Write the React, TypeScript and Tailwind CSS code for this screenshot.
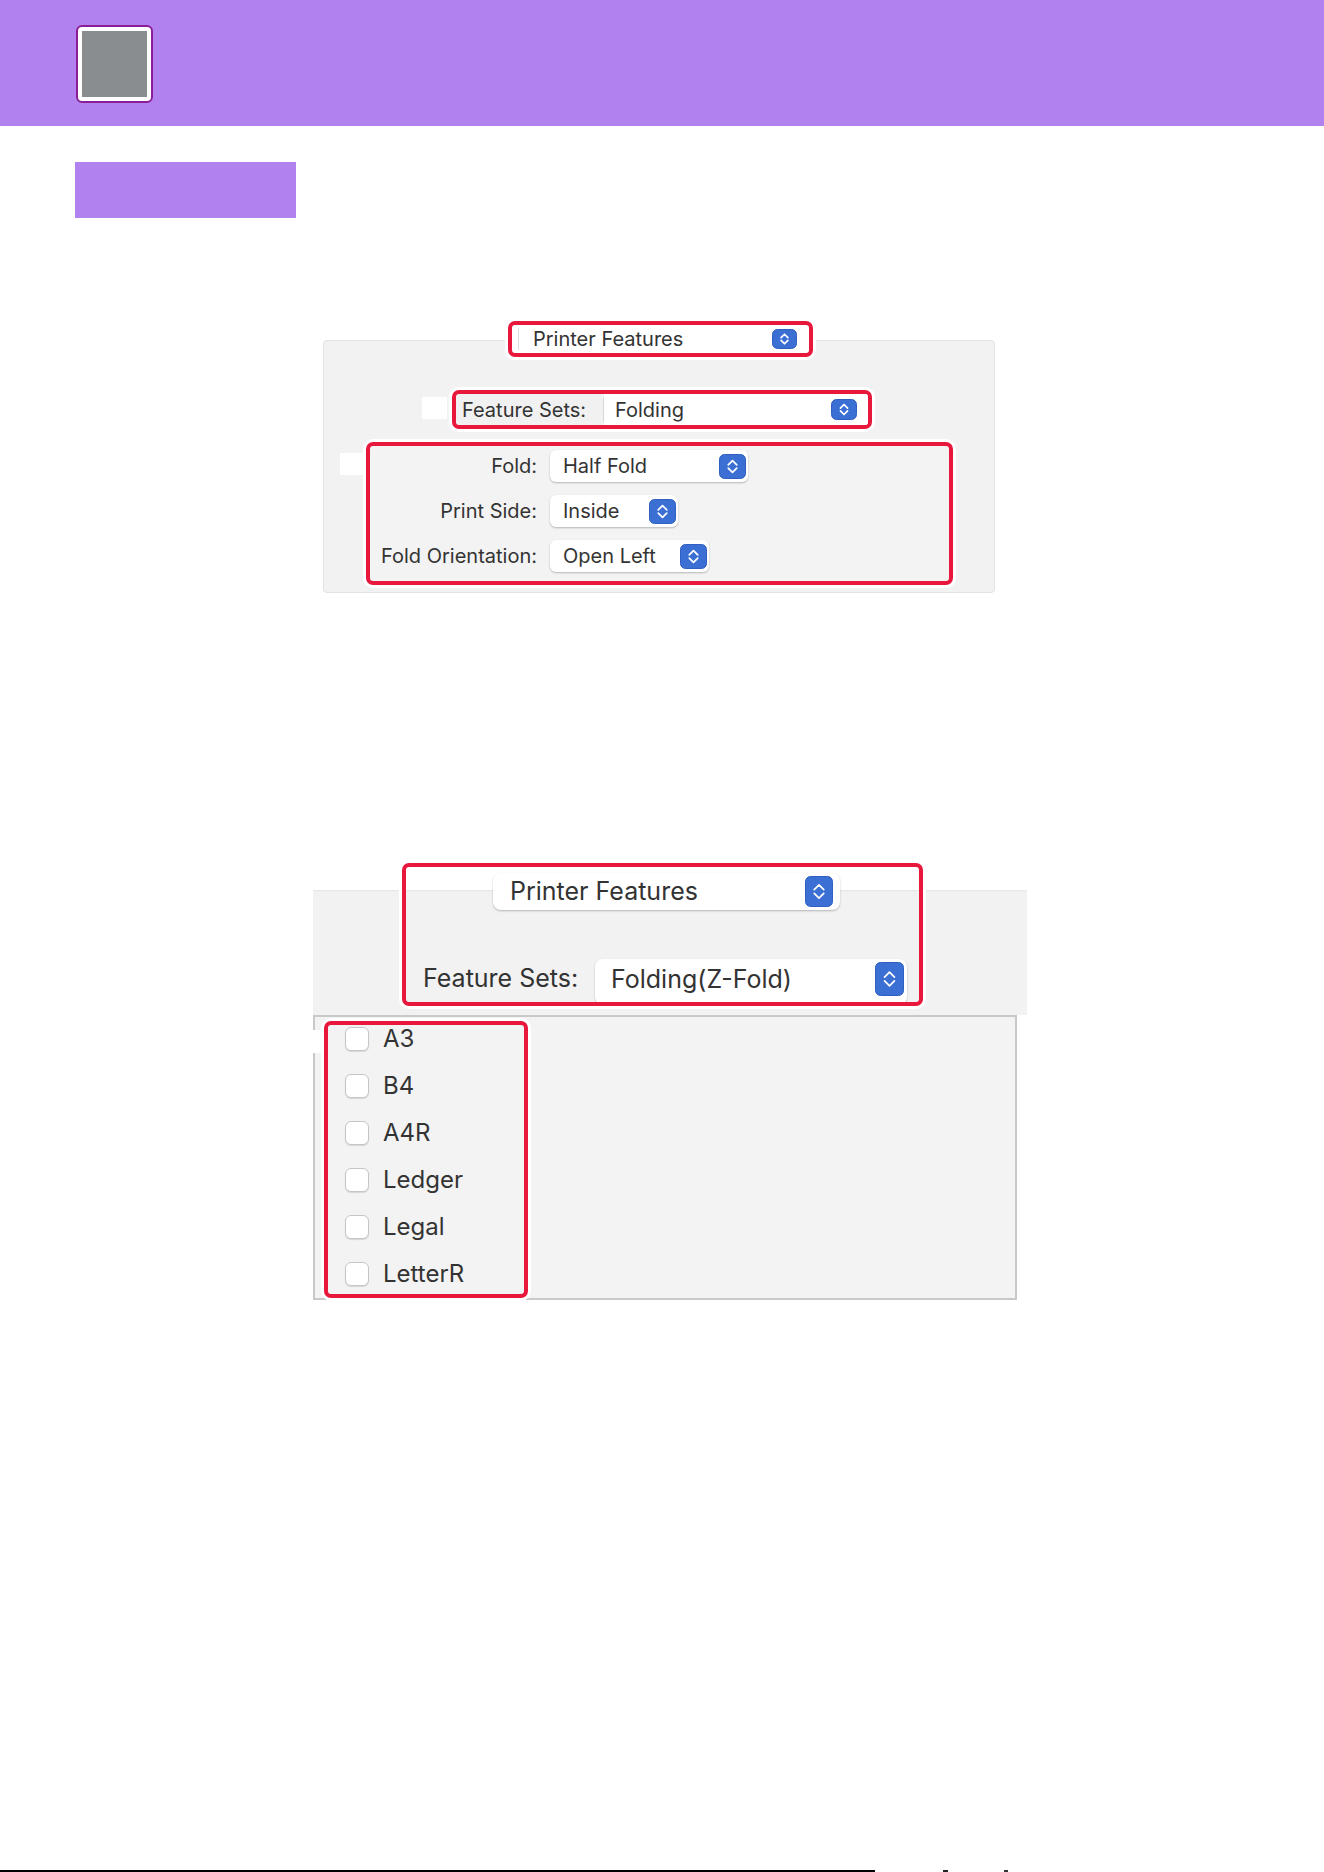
const FONT = "font-['Inter','Liberation_Sans',sans-serif]";

function Stepper({ w, h, className = "" }: { w: number; h: number; className?: string }) {
  const cx = w / 2;
  const cy = h / 2;
  const a = Math.min(w, h) * 0.17;
  return (
    <svg width={w} height={h} viewBox={`0 0 ${w} ${h}`} className={"shrink-0 " + className}>
      <rect x="0.5" y="0.5" width={w - 1} height={h - 1} rx="5" fill="#3b6fd4" stroke="#2f5fbf" />
      <path
        d={`M${cx - a} ${cy - a * 0.4} L${cx} ${cy - a * 1.4} L${cx + a} ${cy - a * 0.4}`}
        stroke="#fff"
        strokeWidth="1.7"
        fill="none"
        strokeLinecap="round"
        strokeLinejoin="round"
      />
      <path
        d={`M${cx - a} ${cy + a * 0.4} L${cx} ${cy + a * 1.4} L${cx + a} ${cy + a * 0.4}`}
        stroke="#fff"
        strokeWidth="1.7"
        fill="none"
        strokeLinecap="round"
        strokeLinejoin="round"
      />
    </svg>
  );
}

const foldRows = [
  { label: "Fold:", value: "Half Fold", width: "w-[198px]" },
  { label: "Print Side:", value: "Inside", width: "w-[128px]" },
  { label: "Fold Orientation:", value: "Open Left", width: "w-[159px]" },
];

const sizes = ["A3", "B4", "A4R", "Ledger", "Legal", "LetterR"];

export default function App() {
  return (
    <div className={`flex h-[1872px] w-[1324px] flex-col bg-white ${FONT}`}>
      {/* Header band */}
      <div className="flex h-[126px] items-start bg-[#b181f0] pl-[76px] pt-[25px]">
        <div className="rounded-[6px] border-2 border-[#8c1d98] bg-white p-[4px]">
          <div className="h-[66px] w-[65px] bg-[#8a8d8f]" />
        </div>
      </div>

      {/* Step label */}
      <div className="ml-[75px] mt-[36px] h-[56px] w-[221px] bg-[#b181f0]" />

      {/* Screenshot 1 */}
      <div className="ml-[323px] mt-[103px] w-[672px]">
        <div className="relative z-10 ml-[185px] flex h-[36px] w-[305px] items-center rounded-[7px] border-4 border-[#e8173c] bg-white shadow-[0_0_0_3px_#fff]">
          <div className="ml-[6px] h-[22px] w-px bg-[#dcdcdc]" />
          <span className="ml-[14px] text-[20px] leading-[28px] text-[#333]">Printer Features</span>
          <Stepper w={25} h={20} className="ml-auto mr-[12px]" />
        </div>
        <div className="-mt-[17px] h-[253px] rounded-[4px] border border-[#e3e3e3] bg-[#f2f2f2] pt-[49px]">
          <div className="ml-[98px] flex items-start">
            <div className="mt-[7px] h-[22px] w-[25px] bg-white" />
            <div className="ml-[5px] flex h-[39px] w-[420px] items-center overflow-hidden rounded-[7px] border-4 border-[#e8173c] bg-[#f1f1f1] shadow-[0_0_0_3px_#fff]">
              <span className="ml-[6px] w-[141px] text-[20px] text-[#333]">Feature Sets:</span>
              <div className="h-[24px] w-px bg-[#d8d8d8]" />
              <div className="flex h-full flex-1 items-center bg-white">
                <span className="ml-[11px] text-[20px] text-[#333]">Folding</span>
                <Stepper w={26} h={21} className="ml-auto mr-[11px]" />
              </div>
            </div>
          </div>
          <div className="ml-[16px] mt-[13px] flex items-start">
            <div className="mt-[11px] h-[22px] w-[23px] bg-white" />
            <div className="ml-[3px] flex h-[143px] w-[587px] flex-col gap-[13px] rounded-[7px] border-4 border-[#e8173c] bg-[#f3f3f3] pt-[4px] shadow-[0_0_0_3px_#fff]">
              {foldRows.map((r) => (
                <div key={r.label} className="flex h-[32px] items-center">
                  <span className="w-[167px] text-right text-[20px] text-[#333]">{r.label}</span>
                  <div
                    className={`ml-[13px] flex h-[32px] items-center rounded-[6px] bg-white shadow-[0_1px_2px_rgba(0,0,0,0.25)] ${r.width}`}
                  >
                    <span className="ml-[13px] text-[20px] text-[#333]">{r.value}</span>
                    <Stepper w={27} h={25} className="ml-auto mr-[2px]" />
                  </div>
                </div>
              ))}
            </div>
          </div>
        </div>
      </div>

      {/* Screenshot 2 */}
      <div className="ml-[313px] mt-[270px] w-[714px]">
        <div className="h-[152px] bg-[linear-gradient(to_bottom,#fff_27px,#e4e4e4_27px,#f2f2f2_29px)] pl-[89px]">
          <div className="flex h-[143px] w-[521px] flex-col overflow-hidden rounded-[7px] border-4 border-[#e8173c] shadow-[0_0_0_3px_#fff]">
            <div className="ml-[87px] mt-[6px] flex h-[37px] w-[347px] shrink-0 items-center rounded-[8px] bg-white shadow-[0_1px_2px_rgba(0,0,0,0.25)]">
              <span className="ml-[17px] text-[25px] text-[#333]">Printer Features</span>
              <Stepper w={28} h={31} className="ml-auto mr-[7px]" />
            </div>
            <div className="ml-[17px] mt-[49px] flex items-start">
              <span className="w-[172px] text-[25px] leading-[38px] text-[#333]">Feature Sets:</span>
              <div className="flex h-[46px] w-[312px] shrink-0 items-start rounded-[8px] bg-white shadow-[0_1px_2px_rgba(0,0,0,0.25)]">
                <span className="ml-[16px] text-[25px] leading-[40px] text-[#333]">Folding(Z-Fold)</span>
                <Stepper w={29} h={34} className="ml-auto mr-[3px] mt-[3px]" />
              </div>
            </div>
          </div>
        </div>
        <div className="flex h-[285px] w-[704px] items-start border-2 border-[#c9c9c9] bg-[#f3f3f3] pt-[4px]">
          <div className="-ml-[2px] mt-[9px] h-[23px] w-[10px] bg-white" />
          <div className="ml-[1px] h-[277px] w-[204px] overflow-hidden rounded-[7px] border-4 border-[#e8173c] shadow-[0_0_0_3px_#fff]">
            <div className="-mt-[10px] flex flex-col">
              {sizes.map((s) => (
                <div key={s} className="flex h-[47px] items-center">
                  <div className="ml-[17px] h-[24px] w-[24px] rounded-[6px] border border-[#c6c6c6] bg-white shadow-[0_1px_1px_rgba(0,0,0,0.12)]" />
                  <span className="ml-[14px] text-[24px] text-[#333]">{s}</span>
                </div>
              ))}
            </div>
          </div>
        </div>
      </div>

      {/* Bottom rule */}
      <div className="mt-auto flex h-[2px] items-end">
        <div className="h-[2px] w-[875px] bg-black" />
        <div className="ml-[68px] h-[2px] w-[5px] bg-[#222]" />
        <div className="ml-[56px] h-[2px] w-[4px] bg-[#333]" />
      </div>
    </div>
  );
}
